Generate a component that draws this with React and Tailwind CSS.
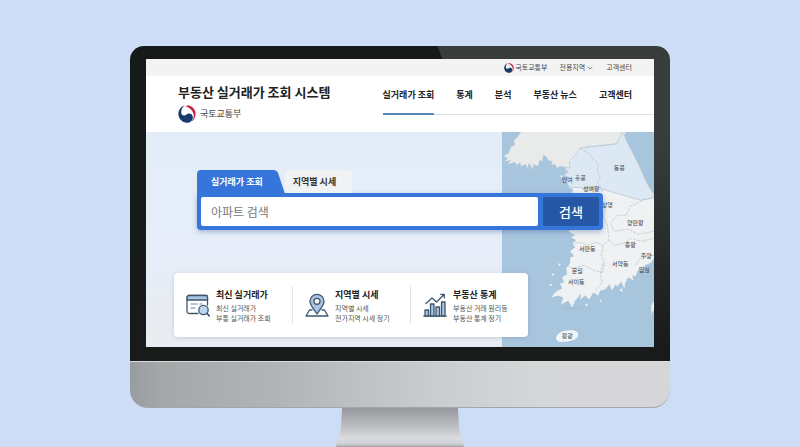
import { ChevronDown } from 'lucide-react'
import { useState } from 'react'

const navItems = ['실거래가 조회', '통계', '분석', '부동산 뉴스', '고객센터']

const searchTabs = ['실거래가 조회', '지역별 시세']

const mapLabels = [
    { x: 117, y: 38, text: '동콩' },
    { x: 65, y: 50, text: '인여' },
    { x: 78, y: 48, text: '홍굥' },
    { x: 89, y: 59, text: '성여왕' },
    { x: 105, y: 75, text: '상영' },
    { x: 133, y: 93, text: '양만왕' },
    { x: 128, y: 115, text: '종왕' },
    { x: 85, y: 119, text: '서만동' },
    { x: 144, y: 126, text: '주양' },
    { x: 118, y: 134, text: '서약동' },
    { x: 142, y: 140, text: '임실' },
    { x: 75, y: 141, text: '문월' },
    { x: 74, y: 152, text: '서이동' },
    { x: 65, y: 205, text: '왕광' },
]

const Emblem = ({ className }) => (
    <svg viewBox="0 0 24 24" className={className} aria-hidden="true">
        <path fill="#173a6b" d="M9 .8C4 2 .5 6.500.5 12c0 6.300 5.100 11.500 11.500 11.500 4 0 7.800-2.600 7.800-7 0-3.400-2.400-5.300-5-5.300-3.300 0-3.800 2.800-6.600 2.800-2.500 0-3.900-2-3.900-4.500C4.300 6 6 2.800 9 .8z" />
        <path fill="#c8203f" d="M9.500 1.400C12.500-.1 16.300.5 19.200 2.900c3.200 2.700 4.600 6.300 4.200 10-.4 3.400-2 6.200-4.400 8.200 1.800-3 2.600-6.300 1.600-9.600C19.200 6.700 15 3 9.500 1.400z" />
        <path fill="#173a6b" d="M21 19.400c-.8 1.100-1.800 2-3 2.600l.6-1.300z" />
    </svg>
)

const ListIcon = () => (
    <svg viewBox="0 0 24 24" className="h-6 w-6 shrink-0" fill="none" stroke="#40566f" strokeWidth="1.300" strokeLinecap="round" strokeLinejoin="round" aria-hidden="true">
        <path fill="#fff" d="M12 20.500H3a2 2 0 0 1-2-2V4.500a2 2 0 0 1 2-2h17a1.500 1.500 0 0 1 1.500 1.500v8" />
        <path fill="#a9c5e2" d="M1 7V4.500a2 2 0 0 1 2-2h17A1.500 1.500 0 0 1 21.500 4v3z" />
        <path stroke="#9bb0c8" d="M5 11h6M14 11h2M5 15h4" />
        <circle cx="17.500" cy="17" r="4.700" fill="#bdd6ee" />
        <path strokeWidth="1.700" d="m21 20.500 2.300 2.300" />
    </svg>
)

const PinIcon = () => (
    <svg viewBox="0 0 24 24" className="h-6 w-6 shrink-0" fill="none" stroke="#40566f" strokeWidth="1.300" strokeLinecap="round" strokeLinejoin="round" aria-hidden="true">
        <path d="M7 17H4.500L1 23h22l-3.500-6H17" />
        <path fill="#a9c5e2" d="M12 21C9 16.500 5 12.500 5 8.300a7 7 0 0 1 14 0C19 12.500 15 16.500 12 21z" />
        <circle cx="12" cy="8.300" r="3" fill="#fff" />
    </svg>
)

const ChartIcon = () => (
    <svg viewBox="0 0 24 24" className="h-6 w-6 shrink-0" fill="none" stroke="#40566f" strokeWidth="1.300" strokeLinecap="round" strokeLinejoin="round" aria-hidden="true">
        <path d="M.8 23h22.400" />
        <path fill="#a9c5e2" d="M2 23v-6h3.500v6zM7.500 23V11H11v12zM13 23v-9h3.500v9zM18.500 23V9H22v14z" />
        <path d="m3 10.500 6-5.500 4.500 4L21 1.500M17.800 1.300h3.500v3.500" />
    </svg>
)

const services = [
    { icon: ListIcon, title: '최신 실거래가', lines: ['최신 실거래가', '부통 실거래가 조회'] },
    { icon: PinIcon, title: '지역별 시세', lines: ['지역별 시세', '전가지역 시세 정기'] },
    { icon: ChartIcon, title: '부동산 통계', lines: ['부동산 거래 원리등', '부동산 통계 정기'] },
]

const KoreaMap = () => (
    <svg viewBox="0 0 152 215" preserveAspectRatio="xMidYMin slice" className="h-full w-full" role="img" aria-label="지도">
        <rect width="152" height="215" fill="#a8c5de" />

        {/* land */}
        <path fill="#e9ebeb" stroke="#d7dde1" strokeWidth=".5" d="M19 0 15 6l-3 2 1 5-4 2-2 6-5 3 4 2-3 3 6-1-3 4 7-2 2 3 3-3 1 4 5-2 1 4 2-5 4 6 0-5 5 2 1-6 3 1 1-6 3 1 2 4 4 1 0 4 3-1 2 4 3-2 5 1 1 5 2-4 4-2 3-6 10-13 35-4 5-10V0z" />
        <path fill="#eff1f2" d="m66 55 34 2 21 6 17 5 14-4v61l-3 5-6 3-5 5-2-1-3 7-3-1 1 5-5-3-3 5-1 6-3-7-4 5-2-2-3 6-3-6-4 5-5 1-2 5-5-3-4 7-4-4-5 4 1-6-6 7-3 7-4-7-7 4 2-7-5-2-7 2 5-6 6-3-2-5 4-1-2-5 5-3-1-6 4-5 0-6 4-1-4-5 5-4-3-4 4-3-5-3 4-2-7-4 6-3-5-4 5-4 1-6-3-5 4-8-5-4 2-8z" />
        <path fill="#dce8f4" stroke="#b6c3cf" strokeWidth=".6" d="m67 30 11-14 36-4 6-12c3 4 4 10 8 16l8 16 8 18 8 13-3 3-11 2-17-5-21-6-33-2-3-6 2-4-5-2 5-3-3-5 5 1z" />
        <path fill="#eff1f2" d="m152 168-3 5 0 8 3-4z" />
        <path fill="#f2f6f8" d="M54 206c0-5 6-8 12-8 6-1 10 1 10 4 0 4-5 6-10 7-5 0-11 2-12-3z" />
        <path fill="#eff1f2" d="m49 142 3-1-1 3zM47 152l4-1-2 3zM56 131l3 1-2 2zM58 43l3 1-2 2zM117 157l3-1 0 4zM97 168l2-1 0 3zM83 171l3 1-2 2z" />

        {/* boundaries */}
        <g fill="none" stroke="#b2b7bc" strokeWidth=".6" strokeDasharray="3 1">
            <path d="m78 16 9 6 4 5 5 5-1 7 3 6-3 5 5 8" />
            <path d="m100 57-1 10 4 8-2 10 4 7 2 16-6 5-7-3-9 3-8-3-8 2" />
            <path d="m152 65-11 3-13 6-4 9-9 0-7 8 4 8 15-2 8 5 17-3" />
            <path d="m107 108 5 5 10-2 6-5 11 3 13-3" />
            <path d="m101 113-2 10 3 8-1 9-10-2-9-5-11 3-6-3" />
            <path d="m101 131-3 10 2 9-7 8M133 133l5-7 14-3" />
        </g>
        <path fill="none" stroke="#8ba6bd" strokeWidth=".6" strokeDasharray="1 1" d="M61 176h17M51 148l-2 8M58 48l2 3" />

        <g fill="#3c4249" fontSize="6" textAnchor="middle" style={{ fontFamily: '"Noto Sans CJK KR", sans-serif' }}>
            {mapLabels.map((label) => (
                <text key={label.text} x={label.x} y={label.y}>{label.text}</text>
            ))}
        </g>
    </svg>
)

const TopBar = () => (
    <div className="flex h-[17px] items-center justify-end bg-[#f3f3f3] pr-[22px] text-[7px] text-[#4a4a4a]">
        <a href="#molit" className="flex items-center gap-px">
            <Emblem className="h-[10px] w-[10px]" />
            국토교통부
        </a>
        <button type="button" className="ml-3 flex items-center gap-px">
            전용지역
            <ChevronDown size={8} />
        </button>
        <a href="#support" className="ml-3">고객센터</a>
    </div>
)

const Header = () => (
    <header className="flex h-14 items-start justify-between bg-white pl-8">
        <div className="pt-1.5">
            <h1 className="text-[13px] font-bold leading-5 text-[#222]">부동산 실거래가 조회 시스템</h1>
            <p className="mt-0.5 flex items-center gap-1 text-[9px] leading-5 text-[#444]">
                <Emblem className="h-[18px] w-[18px]" />
                국토교통부
            </p>
        </div>
        <nav className="flex gap-[22px] border-b border-[#dde1e5] pr-[22px] text-[9px] font-bold text-[#222]">
            {navItems.map((item, index) => (
                <a
                    key={item}
                    href={`#nav-${index}`}
                    className={`-mb-px flex h-[39px] items-center border-b-2 ${index === 0 ? 'border-[#5587b5]' : 'border-transparent'}`}
                >
                    {item}
                </a>
            ))}
        </nav>
    </header>
)

const SearchBox = () => {
    const [activeTab, setActiveTab] = useState(0)
    const [keyword, setKeyword] = useState('')

    return (
        <form className="mx-[51px]" onSubmit={(event) => event.preventDefault()}>
            <div className="flex h-[23px] text-[9px] font-bold">
                {searchTabs.map((tab, index) => (
                    <button
                        key={tab}
                        type="button"
                        onClick={() => setActiveTab(index)}
                        className={
                            index === activeTab
                                ? 'rounded-tl bg-[#3676da] pl-3.5 pr-[22px] text-white [clip-path:polygon(0_0,calc(100%-10px)_0,calc(100%-7px)_2px,100%_100%,0_100%)]'
                                : 'rounded-t bg-[#f1f2f4] pl-2 pr-4 text-[#333]'
                        }
                    >
                        {tab}
                    </button>
                ))}
            </div>
            <div className="flex h-[37px] gap-[5px] rounded rounded-tl-none bg-[#3676da] p-1 shadow-[0_2px_5px_rgba(40,80,140,0.35)]">
                <input
                    type="text"
                    aria-label="아파트 검색"
                    placeholder="아파트 검색"
                    value={keyword}
                    onChange={(event) => setKeyword(event.target.value)}
                    className="min-w-0 flex-1 rounded-xs bg-white px-2.5 text-xs text-[#333] outline-none placeholder:text-[#777]"
                />
                <button type="submit" className="w-14 rounded-xs bg-[#2557a5] text-[13px] font-medium text-white">검색</button>
            </div>
        </form>
    )
}

const ServiceCard = () => (
    <section className="ml-7 mr-[126px] grid h-16 grid-cols-3 items-center rounded bg-white shadow-[0_1px_4px_rgba(60,80,110,0.2)]">
        {services.map((service, index) => (
            <div key={service.title} className={`flex h-[38px] items-center gap-1.5 pl-3 ${index > 0 ? 'border-l border-[#e2e5e8]' : ''}`}>
                <service.icon />
                <div className="whitespace-nowrap">
                    <h2 className="text-[9px] font-bold leading-4 text-[#222]">{service.title}</h2>
                    {service.lines.map((line) => (
                        <p key={line} className="text-[7px] leading-[10px] text-[#555]">{line}</p>
                    ))}
                </div>
            </div>
        ))}
    </section>
)

const App = () => {
    return (
        <main className="flex min-h-screen flex-col items-center overflow-hidden bg-[#cdddf6] px-[130px] pt-[46px] font-['Noto_Sans_CJK_KR',sans-serif]">
            <div className="w-full rounded-t-[14px] bg-[linear-gradient(to_bottom,transparent_30%,#181b19_95%),linear-gradient(70deg,#151a18_64.4%,#383d3c_64.6%)] px-4 pb-3.5 pt-[13px]">
                <div className="overflow-hidden">
                    <TopBar />
                    <Header />
                    <div className="grid bg-[linear-gradient(to_bottom,#e3edf9,#e6edf8_60%,#e9ecf0)]">
                        <div className="col-start-1 row-start-1 h-full w-[30%] justify-self-end [contain:size]">
                            <KoreaMap />
                        </div>
                        <div className="z-10 col-start-1 row-start-1 flex flex-col gap-[43px] pb-2.5 pt-[38px]">
                            <SearchBox />
                            <ServiceCard />
                        </div>
                    </div>
                </div>
            </div>
            <div className="h-[47px] w-full shrink-0 rounded-b-[18px] border-b border-t border-b-[#a3a5aa] border-t-[#dadbdc] bg-[linear-gradient(to_right,#989ca2,#a5a7a9_6%,#b3b4b7_28%,#cacbce_55%,#d5d6d8_75%,#d6d6d9)]" />
            <svg viewBox="0 0 128 39" className="h-[39px] w-32 shrink-0" aria-hidden="true">
                <defs>
                    <linearGradient id="stand" x1="0" y1="0" x2="0" y2="1">
                        <stop offset="0" stopColor="#97989d" />
                        <stop offset=".35" stopColor="#b2b3b7" />
                        <stop offset=".78" stopColor="#dadbdd" />
                        <stop offset=".92" stopColor="#cfd0d3" />
                        <stop offset="1" stopColor="#a2a4a9" />
                    </linearGradient>
                </defs>
                <path fill="url(#stand)" d="M6 0h116l1 20c1 8 5 13 5 19H0c0-6 4-11 5-19z" />
            </svg>
        </main>
    )
}

export default App
